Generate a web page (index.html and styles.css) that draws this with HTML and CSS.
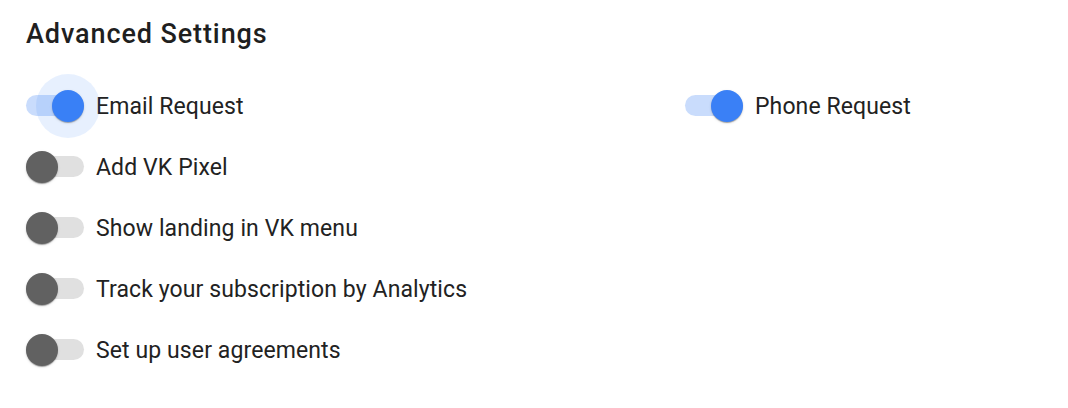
FILE: index.html
```html
<!DOCTYPE html>
<html lang="en">
<head>
<meta charset="utf-8">
<link rel="stylesheet" href="styles.css">
</head>
<body>
<div class="panel">
  <h2 class="title">Advanced Settings</h2>
  <div class="grid">
    <div class="col">
      <label class="row">
        <span class="switch on focus"><span class="track"></span><span class="thumb"></span></span>
        <span class="label">Email Request</span>
      </label>
      <label class="row">
        <span class="switch"><span class="track"></span><span class="thumb"></span></span>
        <span class="label">Add VK Pixel</span>
      </label>
      <label class="row">
        <span class="switch"><span class="track"></span><span class="thumb"></span></span>
        <span class="label">Show landing in VK menu</span>
      </label>
      <label class="row">
        <span class="switch"><span class="track"></span><span class="thumb"></span></span>
        <span class="label">Track your subscription by Analytics</span>
      </label>
      <label class="row">
        <span class="switch"><span class="track"></span><span class="thumb"></span></span>
        <span class="label">Set up user agreements</span>
      </label>
    </div>
    <div class="col">
      <label class="row">
        <span class="switch on"><span class="track"></span><span class="thumb"></span></span>
        <span class="label">Phone Request</span>
      </label>
    </div>
  </div>
</div>
</body>
</html>
```
FILE: styles.css
```css
html, body {
  margin: 0;
  padding: 0;
  background: #ffffff;
}
body {
  font-family: Roboto, "Liberation Sans", Arial, sans-serif;
  color: rgba(0, 0, 0, 0.87);
}
.panel {
  padding: 18px 26px 0 26px;
}
.title {
  margin: 0;
  font-size: 27px;
  line-height: 32px;
  font-weight: 500;
  letter-spacing: 0.9px;
  color: #1f1f1f;
}
.grid {
  margin-top: 25px;
  display: grid;
  grid-template-columns: 659px auto;
  align-items: start;
}
.col {
  display: flex;
  flex-direction: column;
}
.row {
  height: 61px;
  display: flex;
  align-items: center;
}
.switch {
  position: relative;
  width: 58px;
  height: 32px;
  display: flex;
  align-items: center;
  flex: none;
}
.track {
  width: 58px;
  height: 21px;
  border-radius: 10.5px;
  background: #e0e0e0;
}
.thumb {
  position: absolute;
  left: 0;
  top: 0;
  width: 32px;
  height: 32px;
  border-radius: 50%;
  background: #616161;
  box-shadow: 0 2px 1px -1px rgba(0,0,0,0.2), 0 1px 1px 0 rgba(0,0,0,0.14), 0 1px 3px 0 rgba(0,0,0,0.12);
}
.switch.on .track {
  background: #c9dcfc;
}
.switch.on .thumb {
  left: 26px;
  background: #3a80f6;
}
.switch.focus .thumb::before {
  content: "";
  position: absolute;
  left: -16px;
  top: -16px;
  width: 64px;
  height: 64px;
  border-radius: 50%;
  background: rgba(58, 128, 246, 0.12);
  z-index: -1;
}
.switch.focus .thumb {
  z-index: 1;
}
.switch.focus .track {
  position: relative;
  z-index: 0;
}
.label {
  margin-left: 12px;
  margin-top: 3px;
  font-size: 23px;
  line-height: 26px;
  letter-spacing: 0.1px;
  color: #222222;
}
```
